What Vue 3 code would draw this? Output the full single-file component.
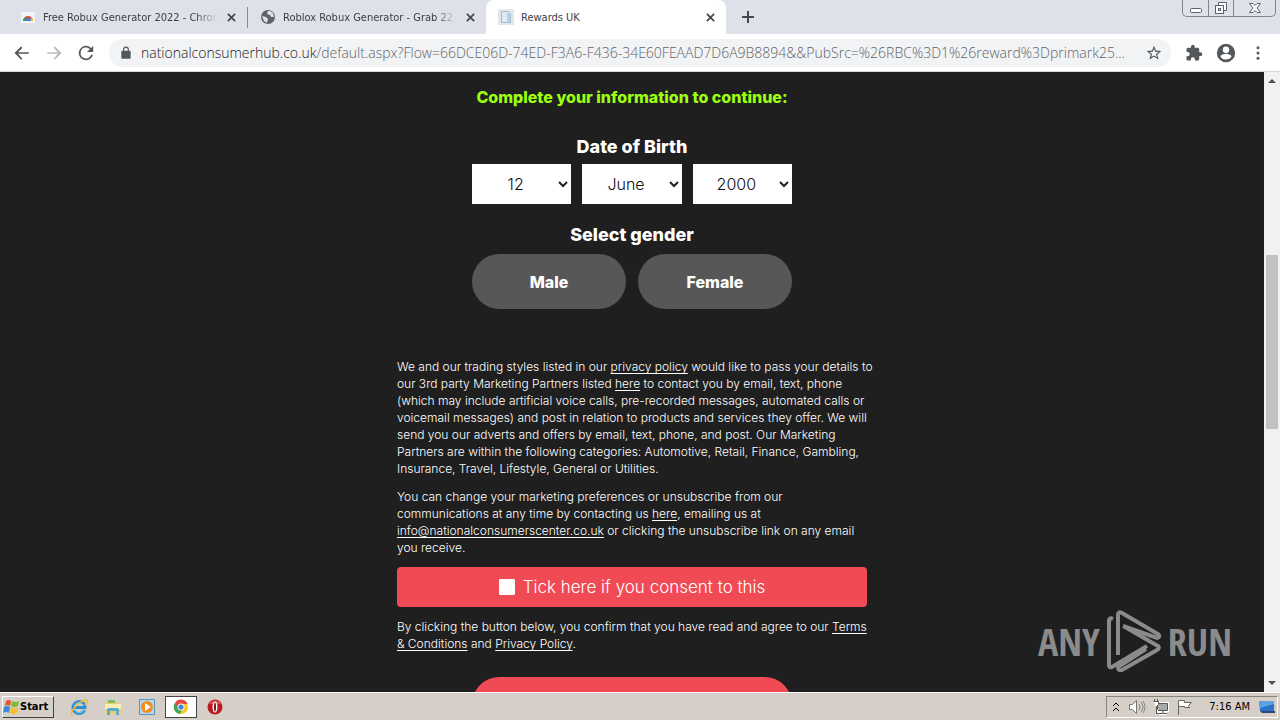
<template>
  <div class="desktop">
    <header class="tabstrip">
      <div class="tabs">
        <div class="tab">
          <svg class="favicon" viewBox="0 0 16 16">
            <path d="M1 3h14v11H1z" fill="#f4f4f4" />
            <path d="M3 12a5 5 0 0 1 10 0z" fill="#dd4b3e" />
            <path d="M3 12a5 5 0 0 1 2-4l3 4z" fill="#3ba55c" />
            <path d="M13 12a5 5 0 0 0-1-3l-4 3z" fill="#fbc91d" />
            <path d="M5 12a3 3 0 0 1 6 0z" fill="#3f7de0" />
          </svg>
          <span class="tab-title faded">Free Robux Generator 2022 - Chrom</span>
          <button class="tab-close" aria-label="Close tab">
            <svg viewBox="0 0 10 10"><path d="M1 1l8 8M9 1l-8 8" /></svg>
          </button>
        </div>
        <div class="tab divided">
          <svg class="favicon" viewBox="0 0 16 16">
            <circle cx="8" cy="8" r="7" fill="#5f6368" />
            <path d="M2 7l4 1 2 2-1 4-3-2zM8 2l-1 3 3 1 1 2 3 0-1-4-3-2z" fill="#dee1e9" />
          </svg>
          <span class="tab-title faded">Roblox Robux Generator - Grab 22.5</span>
          <button class="tab-close" aria-label="Close tab">
            <svg viewBox="0 0 10 10"><path d="M1 1l8 8M9 1l-8 8" /></svg>
          </button>
        </div>
        <div class="tab active">
          <svg class="favicon" viewBox="0 0 16 16">
            <path d="M0 0h16v16H0z" fill="#e4e7ea" />
            <path d="M3.500 2.500h7l2 2v9h-9z" fill="#dceaf4" stroke="#a9b8c5" />
            <path d="M9 4h3v9H9z" fill="#b3d4e8" />
          </svg>
          <span class="tab-title">Rewards UK</span>
          <button class="tab-close" aria-label="Close tab">
            <svg viewBox="0 0 10 10"><path d="M1 1l8 8M9 1l-8 8" /></svg>
          </button>
        </div>
        <button class="new-tab" aria-label="New tab">
          <svg viewBox="0 0 12 12"><path d="M6 0v12M0 6h12" /></svg>
        </button>
      </div>
      <div class="window-buttons">
        <button aria-label="Minimize">
          <svg width="14" height="14" viewBox="0 0 14 14"><rect x="1.500" y="7.500" width="11" height="4" rx="1" /></svg>
        </button>
        <button aria-label="Restore">
          <svg width="14" height="14" viewBox="0 0 14 14">
            <path d="M4.500 4V1.500h8v8H10" />
            <rect x="1.500" y="4.500" width="8" height="8" />
            <rect x="4.500" y="7.500" width="2" height="2" />
          </svg>
        </button>
        <button class="wide" aria-label="Close">
          <svg width="14" height="14" viewBox="0 0 14 14">
            <path d="M1.500 2.500h3.500l2 2 2-2h3.500l-3.500 4.500 3.500 4.500H9l-2-2-2 2H1.500L5 7z" />
          </svg>
        </button>
      </div>
    </header>

    <nav class="toolbar">
      <button aria-label="Back">
        <svg viewBox="0 0 24 24"><path d="M21 11H6.830l5.590-5.590L11 3l-9 9 9 9 1.410-1.410L6.830 13H21z" /></svg>
      </button>
      <button class="disabled" aria-label="Forward">
        <svg viewBox="0 0 24 24"><path d="M3 11h14.170l-5.590-5.590L13 3l9 9-9 9-1.410-1.410L17.170 13H3z" /></svg>
      </button>
      <button aria-label="Reload">
        <svg viewBox="2 2 20 20">
          <path d="M17.650 6.350A8 8 0 1 0 19.730 14h-2.080A6 6 0 1 1 12 6c1.660 0 3.140.69 4.220 1.780L13 11h7V4z" />
        </svg>
      </button>
      <div class="address">
        <svg class="lock" viewBox="0 0 24 24">
          <path d="M18 8h-1V6A5 5 0 0 0 7 6v2H6a2 2 0 0 0-2 2v10a2 2 0 0 0 2 2h12a2 2 0 0 0 2-2V10a2 2 0 0 0-2-2zM9 8V6a3 3 0 0 1 6 0v2z" />
        </svg>
        <span class="url"><span class="domain">nationalconsumerhub.co.uk</span>/default.aspx?Flow=66DCE06D-74ED-F3A6-F436-34E60FEAAD7D6A9B8894&amp;&amp;PubSrc=%26RBC%3D1%26reward%3Dprimark25...</span>
        <button aria-label="Bookmark this tab">
          <svg viewBox="1 1 22 22">
            <path d="M22 9.240l-7.190-.62L12 2 9.190 8.630 2 9.240l5.460 4.730L5.820 21 12 17.270 18.180 21l-1.630-7.030zM12 15.400l-3.760 2.270 1-4.280-3.320-2.880 4.380-.38L12 6.100l1.710 4.040 4.380.38-3.320 2.880 1 4.280z" />
          </svg>
        </button>
      </div>
      <div class="actions">
        <button aria-label="Extensions">
          <svg viewBox="0 0 24 24">
            <path d="M20.500 11H19V7a2 2 0 0 0-2-2h-4V3.500a2.500 2.500 0 0 0-5 0V5H4a2 2 0 0 0-2 2v3.800h1.500a2.700 2.700 0 0 1 0 5.400H2V20a2 2 0 0 0 2 2h3.800v-1.500a2.700 2.700 0 0 1 5.400 0V22H17a2 2 0 0 0 2-2v-4h1.500a2.500 2.500 0 0 0 0-5z" />
          </svg>
        </button>
        <button class="profile" aria-label="Profile">
          <svg viewBox="0 0 24 24">
            <path d="M12 2a10 10 0 1 0 0 20 10 10 0 0 0 0-20zm0 3a3.500 3.500 0 1 1 0 7 3.500 3.500 0 0 1 0-7zm0 14.200a7.200 7.200 0 0 1-6-3.220c.03-1.990 4-3.080 6-3.080s5.970 1.090 6 3.080a7.200 7.200 0 0 1-6 3.220z" />
          </svg>
        </button>
        <button aria-label="Menu">
          <svg viewBox="0 0 24 24">
            <circle cx="12" cy="5" r="2" /><circle cx="12" cy="12" r="2" /><circle cx="12" cy="19" r="2" />
          </svg>
        </button>
      </div>
    </nav>

    <div class="viewport">
      <main class="page">
        <form class="survey" @submit.prevent>
          <h1>Complete your information to continue:</h1>

          <h2>Date of Birth</h2>
          <div class="dob">
            <div v-for="field in dob" :key="field.label" class="select-box">
              <select v-model="field.value" :aria-label="field.label">
                <option v-for="option in field.options" :key="option">{{ option }}</option>
              </select>
              <svg viewBox="0 0 10 8"><path d="M1 2l4 4 4-4" /></svg>
            </div>
          </div>

          <h2>Select gender</h2>
          <div class="genders">
            <button v-for="gender in genders" :key="gender" type="button">{{ gender }}</button>
          </div>

          <div class="terms">
            <p>
              We and our trading styles listed in our <a href="#">privacy policy</a> would like to pass your details to<br>
              our 3rd party Marketing Partners listed <a href="#">here</a> to contact you by email, text, phone<br>
              (which may include artificial voice calls, pre-recorded messages, automated calls or<br>
              voicemail messages) and post in relation to products and services they offer. We will<br>
              send you our adverts and offers by email, text, phone, and post. Our Marketing<br>
              Partners are within the following categories: Automotive, Retail, Finance, Gambling,<br>
              Insurance, Travel, Lifestyle, General or Utilities.
            </p>
            <p>
              You can change your marketing preferences or unsubscribe from our<br>
              communications at any time by contacting us <a href="#">here</a>, emailing us at<br>
              <a href="#">info@nationalconsumerscenter.co.uk</a> or clicking the unsubscribe link on any email<br>
              you receive.
            </p>
            <label class="consent">
              <input v-model="consent" type="checkbox">
              Tick here if you consent to this
            </label>
            <p>
              By clicking the button below, you confirm that you have read and agree to our <a href="#">Terms<br>
              &amp; Conditions</a> and <a href="#">Privacy Policy</a>.
            </p>
          </div>

          <button class="submit" type="submit" aria-label="Continue"></button>
        </form>

        <div class="watermark">
          <span>ANY</span>
          <svg viewBox="0 0 56 62">
            <path d="M7 9q-4-2-4 2v44q0 3 3 2l35-21" />
            <path d="M12 45V5q0-4 4-2l36 21q3 3-1 4L17 16" />
            <path d="M19 17l33 19q2 2-1 4L16 60q-4 1-4-3l28-18" />
          </svg>
          <span>RUN</span>
        </div>
      </main>
      <div class="scrollbar">
        <svg viewBox="0 0 8 4"><path d="M0 4l4-4 4 4z" /></svg>
        <div class="track"><div class="thumb"></div></div>
        <svg viewBox="0 0 8 4"><path d="M0 0l4 4 4-4z" /></svg>
      </div>
    </div>

    <footer class="taskbar">
      <button class="start">
        <svg viewBox="0 0 16 16">
          <path d="M3 2q3-2 5 0L7 7Q4 5 2 7z" fill="#e8532b" />
          <path d="M9 2q3 2 7 0l-1 5q-4 2-7 0z" fill="#7fb93c" />
          <path d="M1 8q3-2 6 0l-1 6q-3-2-6 0z" fill="#3d8ad8" />
          <path d="M8 8q3 2 7 1l-1 5q-4 2-7 0z" fill="#f8bd2b" />
        </svg>
        Start
      </button>
      <div class="launchers">
        <button aria-label="Internet Explorer">
          <svg viewBox="0 0 18 18">
            <path d="M14.500 12A6 6 0 1 1 15 9.500H5" fill="none" stroke="#2f8fcf" stroke-width="3" />
            <path d="M14 12A5.500 5.500 0 0 1 4 11M4 8a5.500 5.500 0 0 1 10 0" fill="none" stroke="#7ccbf2" />
            <path d="M3 17Q-1 16 5 9T17 2q1 3-2 5" fill="none" stroke="#e9bd3c" stroke-width="1.500" />
          </svg>
        </button>
        <button aria-label="Explorer">
          <svg viewBox="0 0 18 18">
            <path d="M1 3h6l1 2h9v11H1z" fill="#ecd06f" />
            <path d="M4 2h7v3H4z" fill="#85bd66" />
            <path d="M1 6h16v5H1z" fill="#faf0b5" />
            <path d="M3 17v-5q0-2 2-2h8q2 0 2 2v5h-3v-4H6v4z" fill="#59abd1" />
          </svg>
        </button>
        <button aria-label="Media Player">
          <svg viewBox="0 0 18 18">
            <path d="M1.500 1.500h15v15h-15z" fill="#b8d6ee" stroke="#5794c5" />
            <circle cx="9" cy="9" r="6" fill="#f28c1f" />
            <path d="M7 5l6 4-6 4z" fill="#fff" />
          </svg>
        </button>
        <button class="pressed" aria-label="Chrome">
          <svg viewBox="0 0 18 18">
            <circle cx="9" cy="9" r="7" fill="#fbc916" />
            <path d="M3 5a7 7 0 0 1 12.500 1H9L6 11z" fill="#e24a3b" />
            <path d="M3 5l3.500 6L10 12l-2 4A7 7 0 0 1 3 5z" fill="#41a756" />
            <circle cx="9" cy="9" r="3.500" fill="#fff" />
            <circle cx="9" cy="9" r="2.600" fill="#4285d8" />
          </svg>
        </button>
        <button aria-label="Opera">
          <svg viewBox="0 0 18 18">
            <circle cx="9" cy="9" r="7.500" fill="#b91b20" />
            <path d="M3 6a7 7 0 0 1 12 0z" fill="#d9565a" />
            <ellipse cx="9" cy="9" rx="2.500" ry="5.500" fill="#fff" />
            <ellipse cx="9" cy="9" rx="1" ry="4.500" fill="#8f1015" />
          </svg>
        </button>
      </div>
      <div class="tray">
        <svg class="chevrons" viewBox="0 0 8 12"><path d="M1 5l3-3 3 3M1 10l3-3 3 3" /></svg>
        <svg viewBox="0 0 18 18">
          <path d="M1.500 6.500h3l4-4v13l-4-4h-3z" fill="#fff" stroke="#777" />
          <path d="M11 6q2 3 0 6M13 4q4 5 0 10M15 3q4 6 0 12" fill="none" stroke="#888" />
        </svg>
        <svg viewBox="0 0 18 18">
          <path d="M5.500 5.500h10v7h-10zM7 15.500h8M11 13v2" fill="#aaa" stroke="#fff" stroke-width="3" />
          <path d="M5.500 5.500h10v7h-10zM7 15.500h8M11 13v2" fill="#aaa" stroke="#555" />
          <path d="M1.500 3.500h5v3l-2 2v7h3" fill="#fff" stroke="#555" />
          <path d="M2.500 1v3M5.500 1v3" stroke="#555" />
        </svg>
        <svg viewBox="0 0 18 18">
          <path d="M2.500 17V2.500h6v2h7l-3 3 1 2h-5v-1h-6" fill="#fff" stroke="#666" />
        </svg>
        <time>7:16 AM</time>
        <svg viewBox="0 0 18 18">
          <path d="M1 3h15v10H2z" fill="#2c72c7" />
          <path d="M1 3h15v3L2 10z" fill="#5ea2e4" />
          <path d="M2 13h15v2H4z" fill="#26496f" />
        </svg>
      </div>
    </footer>
  </div>
</template>

<script setup>
import { reactive, ref } from 'vue'

const dob = reactive([
  { label: 'Day', value: '12', options: ['11', '12', '13'] },
  { label: 'Month', value: 'June', options: ['May', 'June', 'July'] },
  { label: 'Year', value: '2000', options: ['1999', '2000', '2001'] }
])

const genders = ['Male', 'Female']
const consent = ref(false)
</script>

<style>
body {
  margin: 0;
}
</style>

<style scoped>
* {
  box-sizing: border-box;
}

.desktop {
  height: 100vh;
  display: flex;
  flex-direction: column;
  font-family: "DejaVu Sans Condensed", "DejaVu Sans", sans-serif;
  color: #3c4043;
}

button {
  border: 0;
  padding: 0;
  background: none;
  font-family: inherit;
}

.desktop svg {
  display: block;
  flex: none;
}

.tabstrip {
  height: 34px;
  display: flex;
  justify-content: space-between;
  background: #dee1e9;
}

.tabs {
  display: flex;
  min-width: 0;
  padding-left: 8px;
}

.tab {
  width: 239px;
  display: flex;
  align-items: center;
  gap: 7px;
  padding: 0 9px 0 12px;
}

.tab.divided {
  border-left: 1px solid #888c92;
  border-image: linear-gradient(transparent 8px, #888c92 8px, #888c92 27px, transparent 27px) 1;
}

.tab.active {
  width: 240px;
  background: #fff;
  border-radius: 8px 8px 0 0;
}

.favicon {
  width: 16px;
  height: 16px;
}

.tab-title {
  flex: 1;
  white-space: nowrap;
  font-size: 11px;
}

.faded {
  min-width: 0;
  mask-image: linear-gradient(to right, #000 88%, transparent);
}

.tab-close {
  width: 14px;
  height: 16px;
  display: grid;
  place-items: center;
}

.tab-close svg {
  width: 9px;
  height: 9px;
}

.tab-close path,
.new-tab path {
  stroke: #45494d;
  stroke-width: 2;
}

.new-tab {
  padding: 0 16px;
}

.new-tab svg {
  width: 12px;
  height: 12px;
}

.window-buttons {
  display: flex;
  height: 17px;
  border: 1px solid #81858e;
  border-top: 0;
  border-radius: 0 0 5px 5px;
  margin-right: 4px;
}

.window-buttons button {
  width: 25px;
  display: grid;
  place-items: center;
}

.window-buttons button + button {
  border-left: 1px solid #81858e;
}

.window-buttons .wide {
  width: 42px;
}

.window-buttons svg {
  fill: #fff;
  stroke: #5c6068;
}

.toolbar {
  height: 38px;
  display: flex;
  align-items: center;
  gap: 14px;
  padding: 0 13px;
  background: #fff;
  border-bottom: 1px solid #d5d7da;
}

.toolbar svg {
  width: 18px;
  height: 18px;
  fill: #54585c;
}

.toolbar .disabled svg {
  fill: #b9bbbe;
}

.toolbar .profile svg {
  width: 22px;
  height: 22px;
}

.actions {
  display: flex;
  align-items: center;
  gap: 12px;
}

.address {
  flex: 1;
  min-width: 0;
  height: 28px;
  display: flex;
  align-items: center;
  gap: 8px;
  padding: 0 9px 0 10px;
  border-radius: 14px;
  background: #f1f3f5;
}

.toolbar .address svg {
  width: 16px;
  height: 16px;
}

.toolbar .address .lock {
  width: 14px;
  height: 14px;
}

.url {
  flex: 1;
  overflow: hidden;
  white-space: nowrap;
  font-family: "Open Sans", "Noto Sans", sans-serif;
  font-size: 14px;
  font-weight: 300;
  color: #5f6368;
}

.domain {
  color: #202124;
}

.viewport {
  flex: 1;
  min-height: 0;
  display: flex;
  background: #1f1f1f;
}

.page {
  flex: 1;
  position: relative;
  overflow: hidden;
  color: #fff;
  font-family: Inter, sans-serif;
}

.survey {
  display: flex;
  flex-direction: column;
  align-items: center;
  padding-top: 13px;
}

h1,
h2 {
  margin: 0;
  font-weight: 800;
  line-height: 24px;
}

h1 {
  margin-bottom: 26px;
  font-size: 16px;
  color: #9cff10;
}

h2 {
  margin-bottom: 5px;
  font-size: 18px;
}

.dob,
.genders {
  width: 320px;
  display: grid;
  grid-template-columns: repeat(3, 1fr);
  gap: 11px;
  margin-bottom: 19px;
}

.select-box {
  display: grid;
  align-items: center;
}

.select-box > * {
  grid-area: 1 / 1;
}

.select-box select {
  width: 100%;
  height: 40px;
  padding: 0 12px 0 0;
  border: 0;
  border-radius: 0;
  appearance: none;
  background: #fff;
  color: #111;
  font-family: inherit;
  font-size: 16px;
  font-weight: 300;
  text-align: center;
  text-align-last: center;
}

.select-box svg {
  width: 10px;
  height: 8px;
  justify-self: end;
  margin-right: 3px;
  pointer-events: none;
}

.select-box path {
  fill: none;
  stroke: #222;
  stroke-width: 2;
}

.genders {
  grid-template-columns: 1fr 1fr;
  gap: 12px;
  margin: 2px 0 49px;
}

.genders button {
  height: 55px;
  border-radius: 28px;
  background: #575757;
  color: #fff;
  font-size: 16px;
  font-weight: 800;
}

.terms {
  width: 470px;
  font-size: 12px;
  font-weight: 300;
  line-height: 17px;
  white-space: nowrap;
}

.terms p {
  margin: 0 0 11px;
}

.terms a {
  color: inherit;
  text-underline-offset: 2px;
}

.consent {
  height: 40px;
  display: flex;
  align-items: center;
  justify-content: center;
  gap: 8px;
  margin-bottom: 11px;
  border-radius: 4px;
  background: #f04b54;
  font-size: 17px;
}

.consent input {
  width: 16px;
  height: 16px;
  margin: 0;
  appearance: none;
  background: #fff;
  border-radius: 1px;
}

.consent input:checked {
  border: 4px solid #fff;
  background: #1f1f1f;
}

.submit {
  width: 320px;
  height: 55px;
  margin-top: 14px;
  border-radius: 28px;
  background: #f04b54;
}

.watermark {
  position: absolute;
  right: 32px;
  bottom: 20px;
  display: flex;
  align-items: center;
  gap: 6px;
  color: #8b8b8b;
  font-family: "Liberation Sans Narrow", "Open Sans Condensed", "Open Sans", sans-serif;
  font-size: 38px;
  line-height: 62px;
}

.watermark svg {
  width: 56px;
  height: 62px;
  fill: none;
  stroke: #8b8b8b;
  stroke-width: 4;
}

.scrollbar {
  width: 16px;
  display: flex;
  flex-direction: column;
  align-items: center;
  padding: 7px 1px;
  background: #f1f1f1;
}

.scrollbar svg {
  width: 8px;
  height: 4px;
  fill: #505050;
}

.track {
  flex: 1;
  align-self: stretch;
  padding: 172px 1px 0;
}

.thumb {
  height: 174px;
  background: #c1c1c1;
}

.taskbar {
  height: 28px;
  display: flex;
  align-items: center;
  padding: 2px;
  background: #d5cfc7;
  border-top: 1px solid #fff;
  color: #000;
}

.start {
  height: 22px;
  width: 52px;
  display: flex;
  align-items: center;
  gap: 1px;
  border: 1px solid #fff;
  border-right-color: #444;
  border-bottom-color: #444;
  font-size: 11px;
  font-weight: 700;
}

.start svg {
  width: 16px;
  height: 16px;
}

.launchers {
  flex: 1;
  display: flex;
  gap: 2px;
  padding-left: 9px;
}

.launchers button {
  width: 32px;
  height: 22px;
  display: grid;
  place-items: center;
}

.launchers .pressed {
  border: 1px solid #444;
  background: #fff;
}

.launchers svg,
.tray svg {
  width: 18px;
  height: 18px;
}

.tray {
  height: 22px;
  display: flex;
  align-items: center;
  gap: 6px;
  padding: 0 1px 0 5px;
  border: 1px solid #87837d;
  border-right-color: #fff;
  border-bottom-color: #fff;
  font-size: 11px;
}

.tray .chevrons {
  width: 8px;
  height: 12px;
  margin-right: 2px;
  fill: none;
  stroke: #000;
}

time {
  padding: 0 2px 0 9px;
}
</style>
